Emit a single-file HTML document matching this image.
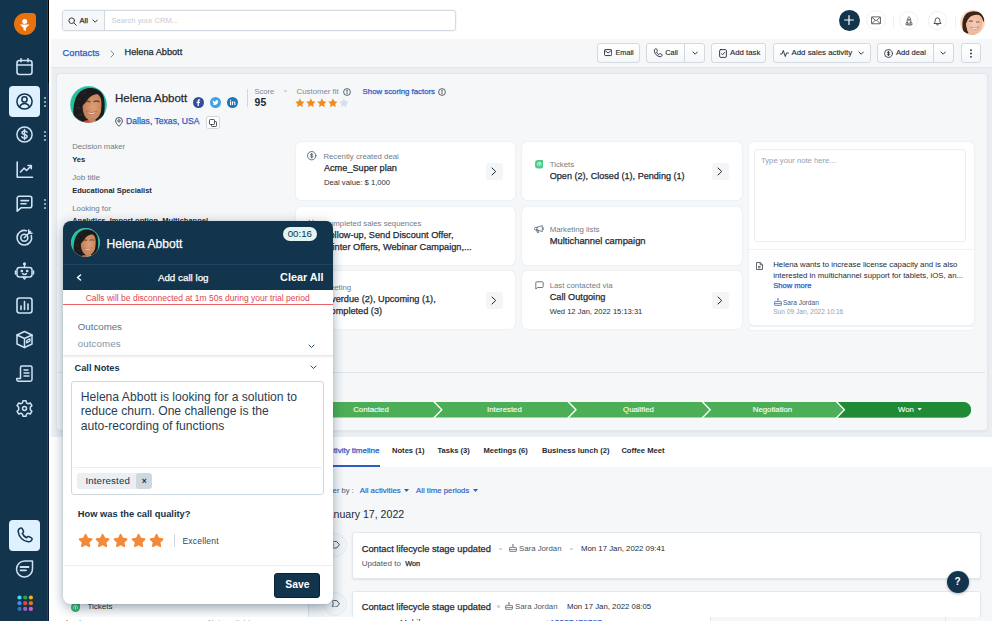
<!DOCTYPE html>
<html lang="en">
<head>
<meta charset="utf-8">
<title>Helena Abbott - Contacts</title>
<style>
*{box-sizing:border-box;margin:0;padding:0}
html,body{width:992px;height:621px;overflow:hidden}
body{font-family:"Liberation Sans",sans-serif;color:#12344d;background:#ebeff3;position:relative;font-size:9px}
.abs{position:absolute}
svg{display:block}
/* sidebar */
#side{position:absolute;left:0;top:0;width:49px;height:621px;background:#12344d}
#side .ic{position:absolute;left:14px;width:21px;height:21px}
#side .act{position:absolute;left:9px;width:31px;height:31px;border-radius:4px;background:#dff0ff}
#side .dots{position:absolute;left:44px;width:2px;height:10px}
#side .dots i{display:block;width:2px;height:2px;border-radius:1px;background:#b9c9d8;margin-bottom:2px}
/* top */
#top{position:absolute;left:49px;top:0;width:943px;height:39px;background:#fff}
#crumb{position:absolute;left:49px;top:39px;width:943px;height:29px;background:#f5f7f9;border-bottom:1px solid #dfe5ea}
.btn{position:absolute;top:43px;height:20px;border:1px solid #d3dae1;border-radius:3px;background:linear-gradient(#fff,#f5f7f9);font-size:8px;font-weight:bold;color:#1f2933;line-height:18px;white-space:nowrap}
/* main card */
#card{position:absolute;left:57px;top:74px;width:929.500px;height:356px;background:#f5f7f9;border:1px solid #f5f7f9;border-radius:3px;box-shadow:0 0 0 1px #e2e7ec,0 1px 3px rgba(18,52,77,.10)}
.tile{position:absolute;background:#fff;border-radius:5px;box-shadow:0 0 2px rgba(18,52,77,.10)}
.lbl{position:absolute;font-size:8px;color:#6f7c87;white-space:nowrap}
.val{position:absolute;font-size:9px;font-weight:bold;color:#1f2933;white-space:nowrap}
.sm{position:absolute;font-size:7.5px;color:#27313b;white-space:nowrap}
.chev{position:absolute;width:17px;height:17px;border-radius:3px;background:#f3f5f7}
a{color:#2c5cc5;text-decoration:none}
.md{-webkit-text-stroke:.250px currentColor}
.v2{color:#1f2933;white-space:nowrap}
#pop{position:absolute;left:63px;top:221px;width:269.500px;height:382.500px;border-radius:8px;box-shadow:0 7px 14px -3px rgba(18,52,77,.38),0 0 12px rgba(18,52,77,.16),0 0 2px rgba(18,52,77,.10)}
.tb{font-weight:bold;color:#1f2933;white-space:nowrap}
.tc{background:#fff;border:1px solid #e3e8ed;border-radius:3px;box-shadow:0 1px 2px rgba(18,52,77,.10)}
.btn span{font-size:7.800px;font-weight:normal;-webkit-text-stroke-width:.120px;margin-top:.400px}
</style>
</head>
<body>
<svg width="0" height="0" style="position:absolute"><defs>
<filter id="bl" x="-10%" y="-10%" width="120%" height="120%"><feGaussianBlur stdDeviation=".55"/></filter>
<filter id="bl2" x="-10%" y="-10%" width="120%" height="120%"><feGaussianBlur stdDeviation=".45"/></filter>
<radialGradient id="skin" cx=".55" cy=".45" r=".65"><stop offset="0" stop-color="#dfa076"/><stop offset=".7" stop-color="#c4835a"/><stop offset="1" stop-color="#8e5638"/></radialGradient>
<radialGradient id="skin2" cx=".5" cy=".45" r=".7"><stop offset="0" stop-color="#f6cdb4"/><stop offset=".75" stop-color="#ecb497"/><stop offset="1" stop-color="#d99477"/></radialGradient>
<clipPath id="c37"><circle cx="18.500" cy="18.500" r="18.400"/></clipPath>
<clipPath id="c25"><circle cx="12.500" cy="12.500" r="12.400"/></clipPath>
<symbol id="helena" viewBox="0 0 37 37"><g clip-path="url(#c37)"><rect width="37" height="37" fill="#21c2a1"/><g filter="url(#bl)">
<path d="M5 40C2.500 31 2.500 18 6.500 10.500 10 4 15.500 1.800 21 2c7 .3 11.500 4 13 10 1.500 7 .5 17-2.500 28z" fill="#1d1a1e"/>
<path d="M7 14c1.500-1 3-1 4 0M6 22c1.500-1 3-1 4.500.5M8 29c1.500-1 3-.5 4 .5M12 8c1.500-1 3-1 4.500 0" stroke="#3a3438" stroke-width="1.200" fill="none" opacity=".6"/>
<path d="M12.500 20c0-8 4-13.500 10-13.500S32 11.500 32 19c0 7-3 12.500-6.500 14.500l.5 5H17.500l.5-5c-3.500-2-5.500-7-5.500-13.500z" fill="url(#skin)"/>
<path d="M10.500 21c0-9 5-15.500 13-15.500 3 0 5.500 1 7 2.500-5.500-.3-10 1.500-12.500 5-1.500 2.500-3.500 5.500-7.500 8z" fill="#1d1a1e"/>
<path d="M31.500 10.500c1.500 3 2 8 1 14l-1.800 4.500c.8-6 1-12 .8-18.500z" fill="#1d1a1e"/>
<path d="M14.500 16c1.500-.8 4.500-.8 6 0M23.500 15.800c1.500-.8 4.500-.8 6 0" stroke="#4a2c22" stroke-width="1.400" fill="none" opacity=".7"/>
<path d="M16.500 25.500c2.800 1.500 7.200 1.500 10-.3-.8 3.800-8.700 4.300-10 .3z" fill="#fff" stroke="#a5503c" stroke-width=".700"/>
<path d="M12 37.500c1-2.500 4-3.500 6.500-3.500l1.500 3.500z" fill="#d2452f"/>
</g></g><circle cx="18.500" cy="18.500" r="18.300" fill="none" stroke="#fff" stroke-opacity=".4" stroke-width=".500"/></symbol>
<symbol id="usr" viewBox="0 0 25 25"><g clip-path="url(#c25)"><rect width="25" height="25" fill="#fbdcc3"/><g filter="url(#bl2)">
<path d="M3.500 22C1.500 16 2 8 6 4c4-3.500 11-3.500 15-.500 2.500 2 3.500 5.500 3 9l-3-6c-4-2.500-9-2-12 1-2.500 4-2.500 10-1.500 16z" fill="#3d2219"/>
<path d="M5.500 12.500c0-5.500 3.500-9.500 8.500-9.500s8.500 4 8.500 9.500c0 6-3 10.500-7 11.500l1 3H7l1.500-5c-2-2.500-3-6-3-9.500z" fill="url(#skin2)"/>
<path d="M4.500 13c.5-6 4.500-10.500 10-10.500 3 0 5.500 1.200 7 3-5-1.500-9.500-.5-12 2-1.500 1.500-2.500 3-3 5.500z" fill="#3d2219"/>
<path d="M3.500 10.500c-1 4.500 0 9.500 2.500 13.500l2.500-1C6.500 19.500 5.500 15 6 11z" fill="#3d2219"/>
<path d="M9 11.500c1-.6 2.800-.6 3.800 0M16 12.200c1-.5 2.500-.4 3.500.2" stroke="#5a4a52" stroke-width="1.100" fill="none" opacity=".8"/>
<path d="M10.500 17c2 1 5.500 1.200 8 0-.5 3.200-6.500 4-8 0z" fill="#fff" stroke="#e0707a" stroke-width=".800"/>
</g></g></symbol>
</defs></svg>
<!-- SIDEBAR -->
<div id="side">
<div class="abs" style="left:14px;top:13px;width:22px;height:22px;background:#e9720d;border-radius:11px 4px 11px 11px"></div>
<svg class="abs" style="left:14px;top:13px" width="22" height="22" viewBox="0 0 22 22"><circle cx="10.700" cy="8.500" r="2.500" fill="#fff"/><path d="M5.800 11.600h9.800l-3.700 3.500v2.900l-2.400-.900v-2z" fill="#fff"/></svg>
<!-- calendar -->
<svg class="ic" style="top:56px" viewBox="0 0 21 21" fill="none" stroke="#cfe2f5" stroke-width="1.6" stroke-linecap="round" stroke-linejoin="round"><rect x="3" y="4.5" width="15" height="14" rx="2.5"/><path d="M3 9h15M7 2.8v3M14 2.8v3"/></svg>
<!-- contact active -->
<div class="act" style="top:86px"></div>
<svg class="ic" style="top:91px" viewBox="0 0 21 21" fill="none" stroke="#12344d" stroke-width="1.5" stroke-linecap="round" stroke-linejoin="round"><circle cx="10.5" cy="10.5" r="7.6"/><circle cx="10.5" cy="8.4" r="2.6"/><path d="M5.8 15.6c.8-2.2 2.600-3.100 4.700-3.100s3.900.9 4.700 3.100"/></svg>
<div class="dots" style="top:97px"><i></i><i></i><i></i></div>
<!-- dollar -->
<svg class="ic" style="top:124px" viewBox="0 0 21 21" fill="none" stroke="#cfe2f5" stroke-width="1.5" stroke-linecap="round" stroke-linejoin="round"><circle cx="10.5" cy="10.5" r="7.6"/><path d="M13 8.300c-.4-.9-1.300-1.300-2.500-1.300-1.500 0-2.500.7-2.500 1.800 0 2.500 5.100 1.000 5.100 3.500 0 1.100-1.100 1.800-2.600 1.800-1.300 0-2.300-.5-2.700-1.400M10.500 5.400v10.200"/></svg>
<div class="dots" style="top:131px"><i></i><i></i><i></i></div>
<!-- chart -->
<svg class="ic" style="top:159px" viewBox="0 0 21 21" fill="none" stroke="#cfe2f5" stroke-width="1.6" stroke-linecap="round" stroke-linejoin="round"><path d="M3.200 3v15.300h15.300"/><path d="M6.500 13l3.500-3.800 2.600 2.300 4.600-4.800M14 6.500h3.300v3.300"/></svg>
<!-- chat -->
<svg class="ic" style="top:193px" viewBox="0 0 21 21" fill="none" stroke="#cfe2f5" stroke-width="1.6" stroke-linecap="round" stroke-linejoin="round"><path d="M3.200 18.200V5.200a2 2 0 0 1 2-2h10.600a2 2 0 0 1 2 2v7.600a2 2 0 0 1-2 2H7z"/><path d="M7 7.600h7.500M7 10.800h5"/></svg>
<div class="dots" style="top:199px"><i></i><i></i><i></i></div>
<!-- target -->
<svg class="ic" style="top:227px" viewBox="0 0 21 21" fill="none" stroke="#cfe2f5" stroke-width="1.600" stroke-linecap="round" stroke-linejoin="round"><path d="M17.300 8.500a7.300 7.300 0 1 1-4.800-4.800"/><circle cx="10.300" cy="10.700" r="3.500"/><path d="M10.300 10.700l6.200-6.200M14.800 3v3.200H18"/></svg>
<!-- bot -->
<svg class="ic" style="top:261px" viewBox="0 0 21 21" fill="none" stroke="#cfe2f5" stroke-width="1.5" stroke-linecap="round" stroke-linejoin="round"><rect x="3" y="6.500" width="15" height="9.500" rx="2.500"/><path d="M10.500 6.500V3.500M9 16l1.500 2 1.500-2M1.500 10v3M19.500 10v3"/><circle cx="10.500" cy="2.800" r=".8" fill="#cfe2f5"/><circle cx="7.800" cy="10" r=".6" fill="#cfe2f5"/><circle cx="13.200" cy="10" r=".6" fill="#cfe2f5"/><path d="M8.500 12.500c.6.700 1.300 1 2 1s1.400-.3 2-1"/></svg>
<!-- bars -->
<svg class="ic" style="top:295px" viewBox="0 0 21 21" fill="none" stroke="#cfe2f5" stroke-width="1.600" stroke-linecap="round" stroke-linejoin="round"><rect x="3" y="3" width="15" height="15" rx="2.500"/><path d="M7 14.500v-3.500M10.500 14.500V6.500M14 14.500V9"/></svg>
<!-- cube -->
<svg class="ic" style="top:329px" viewBox="0 0 21 21" fill="none" stroke="#cfe2f5" stroke-width="1.500" stroke-linecap="round" stroke-linejoin="round"><path d="M10.500 2.500l7.500 3.500v9l-7.500 3.500L3 15V6z"/><path d="M3 6l7.500 3.500L18 6M10.500 9.500v9"/><rect x="12.700" y="10.800" width="3.200" height="2.400" rx=".5" transform="skewY(-25) translate(0 6.500)"/></svg>
<!-- doc -->
<svg class="ic" style="top:363px" viewBox="0 0 21 21" fill="none" stroke="#cfe2f5" stroke-width="1.500" stroke-linecap="round" stroke-linejoin="round"><path d="M6.500 15.500V4.500a1.500 1.500 0 0 1 1.500-1.500h8.500a1.500 1.500 0 0 1 1.500 1.500v12a1.700 1.700 0 0 1-1.700 1.700H4.500a1.700 1.700 0 0 1-1.700-1.700v-1z"/><path d="M10 7h4M10 10h5M10 13h5"/></svg>
<!-- gear -->
<svg class="ic" style="top:398px" viewBox="0 0 21 21" fill="none" stroke="#cfe2f5" stroke-width="1.500" stroke-linecap="round" stroke-linejoin="round"><path d="M9 2.700h3l.5 2.200 1.700.9 2.100-.8 1.600 2.600-1.600 1.600v2.600l1.600 1.600-1.600 2.600-2.100-.8-1.700.9-.5 2.200H9l-.5-2.200-1.700-.9-2.100.8-1.600-2.600 1.600-1.600V9.200L3.100 7.600 4.700 5l2.100.8 1.700-.9z"/><circle cx="10.500" cy="10.500" r="2"/></svg>
<!-- phone active -->
<div class="act" style="top:519.500px"></div>
<svg class="ic" style="top:524.500px" viewBox="0 0 21 21" fill="none" stroke="#12344d" stroke-width="1.500" stroke-linecap="round" stroke-linejoin="round"><path d="M6.300 3.200c.7-.4 1.500-.2 1.900.5l1.200 2.200c.3.600.2 1.300-.3 1.800l-.8.700c.8 1.900 2.200 3.400 4.300 4.400l.8-.8c.5-.5 1.200-.6 1.800-.3l2.200 1.200c.7.400.9 1.200.5 1.900-.7 1.300-2 2.200-3.600 2-5.400-.8-9.400-4.800-10.100-10.100-.200-1.500.700-2.800 2.100-3.500z"/></svg>
<!-- freshchat -->
<svg class="ic" style="top:557.500px" viewBox="0 0 21 21" fill="none" stroke="#cfe2f5" stroke-width="1.500" stroke-linecap="round" stroke-linejoin="round"><path d="M10.500 3h8v7.500a8 8 0 1 1-8-7.500z"/><path d="M6.500 9h8M6.500 12.300h5.500" stroke-width="1.800"/></svg>
<div class="abs" style="left:47px;top:0;width:1px;height:621px;background:#27435c"></div><div class="abs" style="left:48px;top:0;width:1px;height:83px;background:#000"></div><div class="abs" style="left:48px;top:83px;width:1px;height:538px;background:#0c1b3f"></div>
<!-- grid -->
<svg class="abs" style="left:16.500px;top:595px" width="17" height="17" viewBox="0 0 17 17"><circle cx="2.500" cy="2.500" r="2.100" fill="#4dd6f2"/><circle cx="8.200" cy="2.500" r="2.100" fill="#28a745"/><circle cx="13.900" cy="2.500" r="2.100" fill="#f7b500"/><circle cx="2.500" cy="8.200" r="2.100" fill="#3d8df5"/><circle cx="8.200" cy="8.200" r="2.100" fill="#e2453c"/><circle cx="13.900" cy="8.200" r="2.100" fill="#f46b1b"/><circle cx="2.500" cy="13.900" r="2.100" fill="#2f74b8"/><circle cx="8.200" cy="13.900" r="2.100" fill="#a45bcb"/><circle cx="13.900" cy="13.900" r="2.100" fill="#cc5fd3"/></svg>
</div>
<!-- TOP BAR -->
<div id="top">
<div class="abs" style="left:13px;top:10px;width:393.700px;height:21px;border:1px solid #d3dae1;border-radius:3px;background:#fff;overflow:hidden;box-shadow:0 0 0 1px #f5f7f9">
 <div class="abs" style="left:0;top:0;width:42px;height:19px;background:#f5f7f9;border-right:1px solid #cfd7df"></div>
 <svg class="abs" style="left:5px;top:5.500px" width="9" height="9" viewBox="0 0 9 9" fill="none" stroke="#1f2933" stroke-width=".900" stroke-linecap="round"><circle cx="3.700" cy="3.700" r="2.800"/><path d="M5.800 5.800l2.500 2.500"/></svg>
 <span class="abs md" style="left:16.500px;top:4.500px;font-size:7.500px;line-height:10px;color:#1f2933">All</span>
 <svg class="abs" style="left:29px;top:7.500px" width="6.400" height="4.600" viewBox="0 0 7 5" fill="none" stroke="#1f2933" stroke-width="1" stroke-linecap="round" stroke-linejoin="round"><path d="M1 1l2.500 2.500L6 1"/></svg>
 <span class="abs" style="left:48.500px;top:5px;font-size:7.600px;line-height:10px;color:#c3cbd3">Search your CRM...</span>
</div>
<!-- right icons -->
<div class="abs" style="left:789.500px;top:9.500px;width:21px;height:21px;border-radius:50%;background:#12344d"></div>
<svg class="abs" style="left:795px;top:15px" width="10" height="10" viewBox="0 0 10 10" stroke="#fff" stroke-width="1.200" stroke-linecap="round"><path d="M5 .6v8.800M.6 5h8.800"/></svg>
<div class="abs" style="left:817px;top:10px;width:20px;height:20px;border-radius:50%;border:1px solid #eef1f4;background:#fff"></div>
<svg class="abs" style="left:822px;top:15.700px" width="10" height="8.900" viewBox="0 0 9 8" fill="none" stroke="#22282e" stroke-width=".650" stroke-linejoin="round"><rect x=".500" y=".800" width="8" height="6.200" rx=".600"/><path d="M.600 1l3.900 3.300L8.400 1M.600 7l3-3M8.400 7l-3-3"/></svg>
<div class="abs" style="left:843.500px;top:14.500px;width:1px;height:13px;background:#eef1f4"></div>
<div class="abs" style="left:850px;top:11px;width:19px;height:19px;border-radius:50%;border:1px solid #eef1f4;background:#fff"></div>
<svg class="abs" style="left:855.500px;top:16px" width="8" height="10" viewBox="0 0 8 10" fill="none" stroke="#22282e" stroke-width=".700" stroke-linejoin="round"><path d="M4 .600c1.300 1.200 1.800 2.600 1.800 4.200v2.400H2.200V4.800C2.200 3.200 2.700 1.800 4 .600zM2.200 5.800L1 7.600v1.200h6V7.600L5.800 5.800M3 8.800v.800M5 8.800v.800"/><circle cx="4" cy="3.800" r=".700"/></svg>
<div class="abs" style="left:879px;top:11px;width:19px;height:19px;border-radius:50%;border:1px solid #eef1f4;background:#fff"></div>
<svg class="abs" style="left:884px;top:16px" width="9" height="10" viewBox="0 0 9 10" fill="none" stroke="#22282e" stroke-width=".800" stroke-linejoin="round" stroke-linecap="round"><path d="M1.200 7.200c.800-.800 1-1.600 1-3a2.300 2.300 0 0 1 4.600 0c0 1.400.200 2.200 1 3zM3.600 8.500c.200.400.500.600.900.600s.700-.200.900-.600"/></svg>
<div class="abs" style="left:905.500px;top:14.500px;width:1px;height:13px;background:#eef1f4"></div>
<!-- user avatar -->
<svg class="abs" style="left:910.700px;top:9.700px" width="25" height="25"><use href="#usr"/></svg>
</div>
<div id="crumb">
<a class="abs md" style="left:13.500px;top:7.500px;font-size:9.400px;line-height:12px">Contacts</a>
<svg class="abs" style="left:60.500px;top:10.500px" width="5" height="8" viewBox="0 0 5 8" fill="none" stroke="#6f7c87" stroke-width=".900" stroke-linecap="round" stroke-linejoin="round"><path d="M1 1l3 3-3 3"/></svg>
<span class="abs md" style="left:75.500px;top:6.500px;font-size:9.200px;line-height:12px;color:#1f2933">Helena Abbott</span>
</div>
<!-- action buttons -->
<div class="btn" style="left:596.500px;width:43px">
 <svg class="abs" style="left:6px;top:5.300px" width="8.200" height="7.300" viewBox="0 0 9 8" fill="none" stroke="#1f2933" stroke-width="1" stroke-linejoin="round"><rect x=".600" y=".600" width="7.800" height="6.600" rx="1"/><path d="M.800 1.500l3.700 2.800 3.700-2.800"/></svg>
 <span class="abs md" style="left:18px;top:0;font-size:7.300px">Email</span></div>
<div class="btn" style="left:646px;width:58.500px">
 <svg class="abs" style="left:6px;top:4px" width="10" height="10" viewBox="0 0 10 10" fill="none" stroke="#1f2933" stroke-width=".900" stroke-linejoin="round"><path d="M2.600.800c.500-.200.900 0 1.100.400l.600 1.300c.200.400.100.800-.200 1.100l-.600.500c.500 1.100 1.200 1.900 2.300 2.400l.500-.600c.300-.300.700-.400 1.100-.200l1.300.600c.400.200.600.600.400 1.100-.300.900-1.100 1.400-2 1.300C4 8.300 1.600 5.900 1.300 2.800 1.200 1.900 1.700 1.100 2.600.800z"/></svg>
 <span class="abs md" style="left:18.200px;top:0;font-size:7.400px">Call</span>
 <div class="abs" style="left:37px;top:0;width:1px;height:18px;background:#cfd7df"></div>
 <svg class="abs" style="left:44.500px;top:7px" width="6.400" height="4.600" viewBox="0 0 7 5" fill="none" stroke="#1f2933" stroke-width="1" stroke-linecap="round" stroke-linejoin="round"><path d="M1 1l2.500 2.500L6 1"/></svg></div>
<div class="btn" style="left:711px;width:55px">
 <svg class="abs" style="left:7px;top:4.500px" width="8" height="9" viewBox="0 0 8 9" fill="none" stroke="#1f2933" stroke-width=".900" stroke-linejoin="round" stroke-linecap="round"><rect x=".600" y=".600" width="6.800" height="7.800" rx="1.200"/><path d="M2.400 4.600l1.200 1.200 2-2.400"/></svg>
 <span class="abs md" style="left:18px;top:0">Add task</span></div>
<div class="btn" style="left:772.500px;width:98px">
 <svg class="abs" style="left:6.500px;top:4.500px" width="9" height="9" viewBox="0 0 9 9" fill="none" stroke="#1f2933" stroke-width=".900" stroke-linejoin="round" stroke-linecap="round"><path d="M.500 5h1.500l1.300-3.500 2 6 1.300-3.500h1.900"/></svg>
 <span class="abs md" style="left:18px;top:0;font-size:7.850px">Add sales activity</span>
 <svg class="abs" style="left:84px;top:7px" width="6.400" height="4.600" viewBox="0 0 7 5" fill="none" stroke="#1f2933" stroke-width="1" stroke-linecap="round" stroke-linejoin="round"><path d="M1 1l2.500 2.500L6 1"/></svg></div>
<div class="btn" style="left:877px;width:76.500px">
 <svg class="abs" style="left:6px;top:4.500px" width="9" height="9" viewBox="0 0 9 9" fill="none" stroke="#1f2933" stroke-width=".800" stroke-linecap="round"><circle cx="4.500" cy="4.500" r="4"/><path d="M5.700 3.400c-.200-.400-.600-.600-1.200-.600-.700 0-1.200.300-1.200.800 0 1.200 2.400.500 2.400 1.700 0 .500-.500.800-1.200.800-.600 0-1.100-.200-1.300-.600M4.500 2.200v4.600"/></svg>
 <span class="abs md" style="left:18px;top:0;font-size:7.600px">Add deal</span>
 <div class="abs" style="left:54.500px;top:0;width:1px;height:18px;background:#cfd7df"></div>
 <svg class="abs" style="left:62px;top:7px" width="6.400" height="4.600" viewBox="0 0 7 5" fill="none" stroke="#1f2933" stroke-width="1" stroke-linecap="round" stroke-linejoin="round"><path d="M1 1l2.500 2.500L6 1"/></svg></div>
<div class="btn" style="left:960.500px;width:20.500px">
 <svg class="abs" style="left:8.200px;top:4.500px" width="2" height="9" viewBox="0 0 2 9" fill="#1f2933"><circle cx="1" cy="1.200" r=".900"/><circle cx="1" cy="4.500" r=".900"/><circle cx="1" cy="7.800" r=".900"/></svg></div>

<div class="abs" style="left:49px;top:39px;width:2.500px;height:582px;background:linear-gradient(90deg,#fff 40%,rgba(255,255,255,0))"></div>
<!-- MAIN CARD -->
<div id="card">
<svg class="abs" style="left:11.50px;top:11.00px" width="37" height="37"><use href="#helena"/></svg>
<span class="abs md" style="left:57.00px;top:15.70px;font-size:11.5px;line-height:14px;color:#1f2933;white-space:nowrap">Helena Abbott</span>
<svg class="abs" style="left:135.20px;top:22.30px" width="11" height="11" viewBox="0 0 11 11"><circle cx="5.500" cy="5.500" r="5.500" fill="#2f4f9e"/><path d="M5.900 9V5.900h1l.2-1.200H5.900v-.700c0-.400.100-.600.600-.600h.600V2.300c-.100 0-.500-.100-.900-.100-1 0-1.600.600-1.600 1.600v.900h-1v1.200h1V9z" fill="#fff"/></svg>
<svg class="abs" style="left:152.20px;top:22.30px" width="11" height="11" viewBox="0 0 11 11"><circle cx="5.500" cy="5.500" r="5.500" fill="#3da1ea"/><path d="M8.600 3.700c-.200.100-.500.200-.700.200.300-.200.500-.400.600-.700-.300.100-.500.200-.800.300a1.300 1.300 0 0 0-2.200 1.200c-1.100-.100-2-.600-2.700-1.400-.300.600-.100 1.300.4 1.700-.200 0-.400-.100-.600-.200 0 .600.500 1.200 1.100 1.300-.200.100-.400.100-.600 0 .200.500.700.900 1.200.900-.500.400-1.200.600-1.900.5.600.400 1.300.600 2 .600 2.400 0 3.700-2 3.700-3.700v-.200c.200-.100.400-.300.500-.5z" fill="#fff"/></svg>
<svg class="abs" style="left:168.90px;top:22.30px" width="11" height="11" viewBox="0 0 11 11"><circle cx="5.500" cy="5.500" r="5.500" fill="#1b79ba"/><path d="M3 4.500h1.100V8H3zM3.550 2.700a.65.65 0 1 1 0 1.300.65.65 0 0 1 0-1.300zM4.900 4.500H6v.5c.200-.300.600-.600 1.100-.600 1.100 0 1.300.700 1.300 1.600V8H7.300V6.200c0-.400 0-.900-.600-.900s-.700.500-.7.900V8H4.900z" fill="#fff"/></svg>
<svg class="abs" style="left:57.30px;top:42.30px" width="8" height="10" viewBox="0 0 8 10" fill="none" stroke="#1f2933" stroke-width=".800"><path d="M4 9.300C2 7.300.600 5.600.600 3.900a3.400 3.400 0 0 1 6.800 0C7.400 5.600 6 7.300 4 9.300z"/><circle cx="4" cy="3.900" r="1.200"/></svg>
<a class="abs md" style="left:68.00px;top:41.00px;font-size:8.600px;line-height:11px;white-space:nowrap">Dallas, Texas, USA</a>
<div class="abs" style="left:147.50px;top:41.00px;width:14.500px;height:13px;border:1px solid #cfd7df;border-radius:2.500px;background:#fff"><svg class="abs" style="left:2.500px;top:2px" width="8" height="8" viewBox="0 0 8 8" fill="none" stroke="#1f2933" stroke-width=".800" stroke-linejoin="round"><rect x=".500" y=".500" width="5" height="5" rx=".800"/><path d="M5.500 2.500h1.200a.8.800 0 0 1 .8.800v3.400a.8.800 0 0 1-.8.800H3.300a.8.800 0 0 1-.8-.8V5.500"/></svg></div>
<div class="abs" style="left:189.30px;top:14.00px;width:1px;height:17.500px;background:#cfd7df"></div>
<span class="lbl" style="left:196.40px;top:11.50px;font-size:7.6px;line-height:10px;color:#7b8a97">Score</span>
<span class="val" style="left:196.40px;top:22.30px;font-size:10.4px;line-height:12px;letter-spacing:.300px">95</span>
<div class="abs" style="left:226.20px;top:14.90px;width:2.600px;height:2.600px;border-radius:1.300px;background:#c9d1d9"></div>
<span class="lbl" style="left:238.60px;top:11.50px;font-size:7.8px;line-height:10px;color:#7b8a97">Customer fit</span>
<svg class="abs" style="left:284.9px;top:13.200000000000003px" width="8" height="8" viewBox="0 0 8 8" fill="none" stroke="#1f2933" stroke-width=".700"><circle cx="4" cy="4" r="3.400"/><path d="M4 3.600v2.200" stroke-linecap="round"/><circle cx="4" cy="2.400" r=".300" fill="#1f2933"/></svg><svg class="abs" style="left:237.40px;top:22.60px" width="9.8" height="9.8" viewBox="0 0 10 10"><path d="M5 .3l1.45 3 3.25.45-2.35 2.3.55 3.25L5 7.75 2.1 9.3l.55-3.250L.3 3.750l3.250-.450z" fill="#f28b1c"/></svg>
<svg class="abs" style="left:248.20px;top:22.60px" width="9.8" height="9.8" viewBox="0 0 10 10"><path d="M5 .3l1.45 3 3.25.45-2.35 2.3.55 3.25L5 7.75 2.1 9.3l.55-3.250L.3 3.750l3.250-.450z" fill="#f28b1c"/></svg>
<svg class="abs" style="left:259.00px;top:22.60px" width="9.8" height="9.8" viewBox="0 0 10 10"><path d="M5 .3l1.45 3 3.25.45-2.35 2.3.55 3.25L5 7.75 2.1 9.3l.55-3.250L.3 3.750l3.250-.450z" fill="#f28b1c"/></svg>
<svg class="abs" style="left:269.80px;top:22.60px" width="9.8" height="9.8" viewBox="0 0 10 10"><path d="M5 .3l1.45 3 3.25.45-2.35 2.3.55 3.25L5 7.75 2.1 9.3l.55-3.250L.3 3.750l3.250-.450z" fill="#f28b1c"/></svg>
<svg class="abs" style="left:280.60px;top:22.60px" width="9.8" height="9.8" viewBox="0 0 10 10"><path d="M5 .3l1.45 3 3.25.45-2.35 2.3.55 3.25L5 7.75 2.1 9.3l.55-3.250L.3 3.750l3.250-.450z" fill="#d5dde5"/></svg>
<a class="abs md" style="left:304.60px;top:11.50px;font-size:7.800px;line-height:10px;white-space:nowrap">Show scoring factors</a>
<svg class="abs" style="left:380.3px;top:13.200000000000003px" width="8" height="8" viewBox="0 0 8 8" fill="none" stroke="#1f2933" stroke-width=".700"><circle cx="4" cy="4" r="3.400"/><path d="M4 3.600v2.200" stroke-linecap="round"/><circle cx="4" cy="2.400" r=".300" fill="#1f2933"/></svg><span class="lbl" style="left:14.20px;top:66.90px;font-size:7.7px;line-height:10px;">Decision maker</span>
<span class="val" style="left:14.20px;top:80.00px;font-size:7.5px;line-height:10px;">Yes</span>
<span class="lbl" style="left:14.20px;top:98.40px;font-size:8.05px;line-height:10px;">Job title</span>
<span class="val" style="left:14.20px;top:110.50px;font-size:7.5px;line-height:10px;">Educational Specialist</span>
<span class="lbl" style="left:14.20px;top:129.10px;font-size:7.85px;line-height:10px;">Looking for</span>
<span class="val" style="left:14.20px;top:141.20px;font-size:7.5px;line-height:10px;">Analytics, Import option, Multichannel</span>
<div class="tile" style="left:237.60px;top:67.00px;width:219.3px;height:58px"></div>
<div class="tile" style="left:464.00px;top:67.00px;width:220px;height:58px"></div>
<div class="tile" style="left:237.60px;top:131.70px;width:219.3px;height:58px"></div>
<div class="tile" style="left:464.00px;top:131.70px;width:220px;height:58px"></div>
<div class="tile" style="left:237.60px;top:196.00px;width:219.3px;height:58px"></div>
<div class="tile" style="left:464.00px;top:196.00px;width:220px;height:58px"></div>
<svg class="abs" style="left:249.20px;top:76.20px" width="9.400" height="9.400" viewBox="0 0 9 9" fill="none" stroke="#475867" stroke-width=".800" stroke-linecap="round"><circle cx="4.500" cy="4.500" r="4"/><path d="M5.700 3.400c-.200-.400-.600-.600-1.200-.600-.700 0-1.200.300-1.200.800 0 1.200 2.400.500 2.400 1.700 0 .500-.500.800-1.200.800-.600 0-1.100-.200-1.300-.600M4.500 2.200v4.600"/></svg>
<span class="lbl" style="left:265.40px;top:76.70px;font-size:7.8px;line-height:10px;">Recently created deal</span>
<span class="abs md v2" style="left:265.90px;top:86.50px;font-size:9.2px;line-height:12px;">Acme_Super plan</span>
<span class="sm" style="left:265.90px;top:102.80px;font-size:7.7px;line-height:9px;">Deal value: $ 1,000</span>
<div class="chev" style="left:427.5px;top:87.7px"><svg class="abs" style="left:5.800px;top:4px" width="6" height="9" viewBox="0 0 6 9" fill="none" stroke="#1f2933" stroke-width="1" stroke-linecap="round" stroke-linejoin="round"><path d="M1 1l3.700 3.500L1 8"/></svg></div><svg class="abs" style="left:476.70px;top:85.40px" width="8.500" height="8.500" viewBox="0 0 9 9"><path d="M3.200 0H9v5.800A3.200 3.200 0 0 1 5.800 9H3.200A3.200 3.200 0 0 1 0 5.800V3.200A3.200 3.200 0 0 1 3.200 0z" fill="#4fcb8c"/><path d="M2.600 5.300V4.400a1.900 1.900 0 0 1 3.800 0v.9M4.500 3.800v2.400" fill="none" stroke="#fff" stroke-width=".800" stroke-linecap="round"/></svg>
<span class="lbl" style="left:491.70px;top:84.70px;font-size:7.8px;line-height:10px;">Tickets</span>
<span class="abs md v2" style="left:491.70px;top:94.80px;font-size:9.1px;line-height:12px;">Open (2), Closed (1), Pending (1)</span>
<div class="chev" style="left:653.5px;top:87.9px"><svg class="abs" style="left:5.800px;top:4px" width="6" height="9" viewBox="0 0 6 9" fill="none" stroke="#1f2933" stroke-width="1" stroke-linecap="round" stroke-linejoin="round"><path d="M1 1l3.700 3.500L1 8"/></svg></div><svg class="abs" style="left:249.80px;top:144.00px" width="9" height="8" viewBox="0 0 9 8" fill="none" stroke="#475867" stroke-width=".800" stroke-linejoin="round"><path d="M.800 1l3.200 3-3.200 3M4.500 1l3.200 3-3.200 3"/></svg>
<span class="lbl" style="left:265.40px;top:143.90px;font-size:7.8px;line-height:10px;">Completed sales sequences</span>
<span class="abs md v2" style="left:265.90px;top:153.70px;font-size:9.2px;line-height:12px;">Follow-up, Send Discount Offer,</span>
<span class="abs md v2" style="left:265.90px;top:165.80px;font-size:9.2px;line-height:12px;">Winter Offers, Webinar Campaign,...</span>
<svg class="abs" style="left:476.20px;top:149.80px" width="10" height="8.500" viewBox="0 0 10 8.500" fill="none" stroke="#475867" stroke-width=".750" stroke-linejoin="round" stroke-linecap="round"><path d="M3.300 2.300L8.300.600v6L3.300 5zM3.300 2.300H1.800a1.300 1.300 0 0 0 0 2.700h1.500M2.600 5l.7 2.600h1.300l-.6-2.300M9.300 2.800v1.700"/></svg>
<span class="lbl" style="left:491.70px;top:149.90px;font-size:7.8px;line-height:10px;">Marketing lists</span>
<span class="abs md v2" style="left:491.70px;top:159.70px;font-size:9.4px;line-height:12px;">Multichannel campaign</span>
<svg class="abs" style="left:249.80px;top:208.00px" width="8" height="8" viewBox="0 0 8 8" fill="none" stroke="#475867" stroke-width=".800"><rect x=".500" y="1.200" width="7" height="6.300" rx="1"/><path d="M.5 3.200h7M2.300.400v1.600M5.700.400v1.600"/></svg>
<span class="lbl" style="left:265.40px;top:207.90px;font-size:7.8px;line-height:10px;">Meeting</span>
<span class="abs md v2" style="left:265.90px;top:217.70px;font-size:9.2px;line-height:12px;">Overdue (2), Upcoming (1),</span>
<span class="abs md v2" style="left:265.90px;top:230.20px;font-size:9.2px;line-height:12px;">Completed (3)</span>
<div class="chev" style="left:427.5px;top:216.700px"><svg class="abs" style="left:5.800px;top:4px" width="6" height="9" viewBox="0 0 6 9" fill="none" stroke="#1f2933" stroke-width="1" stroke-linecap="round" stroke-linejoin="round"><path d="M1 1l3.700 3.500L1 8"/></svg></div><svg class="abs" style="left:476.50px;top:205.60px" width="9" height="9" viewBox="0 0 9 9" fill="none" stroke="#475867" stroke-width=".800" stroke-linejoin="round"><path d="M.800 8V1.800a1 1 0 0 1 1-1h5.400a1 1 0 0 1 1 1v3.700a1 1 0 0 1-1 1H2.600z"/></svg>
<span class="lbl" style="left:491.70px;top:205.60px;font-size:7.8px;line-height:10px;">Last contacted via</span>
<span class="abs md v2" style="left:491.70px;top:215.80px;font-size:9.2px;line-height:12px;">Call Outgoing</span>
<span class="sm" style="left:491.70px;top:231.70px;font-size:7.55px;line-height:9px;">Wed 12 Jan, 2022 15:13:31</span>
<div class="chev" style="left:653.5px;top:216.700px"><svg class="abs" style="left:5.800px;top:4px" width="6" height="9" viewBox="0 0 6 9" fill="none" stroke="#1f2933" stroke-width="1" stroke-linecap="round" stroke-linejoin="round"><path d="M1 1l3.700 3.500L1 8"/></svg></div><div class="tile" style="left:691.00px;top:67.00px;width:225px;height:183px;border-radius:5px"></div>
<div class="tile" style="left:691.00px;top:251.80px;width:225px;height:3.500px;border-radius:0 0 5px 5px"></div>
<div class="abs" style="left:695.50px;top:73.50px;width:212px;height:93px;border:1px solid #ebeff3;border-radius:3px;background:#fff"></div>
<span class="lbl" style="left:703.00px;top:81.30px;font-size:7.7px;line-height:9px;color:#92a2b1">Type your note here...</span>
<div class="abs" style="left:691.00px;top:174.00px;width:225.500px;height:1px;background:#f0f3f5"></div>
<svg class="abs" style="left:697.80px;top:186.50px" width="7" height="8" viewBox="0 0 7 8" fill="none" stroke="#1f2933" stroke-width=".700" stroke-linejoin="round"><path d="M.500.500h3.800L6.500 2.700V7.500H.5z"/><path d="M4.200.600v2.200h2.200M2 4.500h2.500M2 5.900h2.500"/></svg>
<span class="abs" style="left:715.20px;top:184.50px;font-size:7.8px;line-height:10px;color:#1f2933;white-space:nowrap;">Helena wants to increase license capacity and is also</span>
<span class="abs" style="left:715.20px;top:195.50px;font-size:7.8px;line-height:10px;color:#1f2933;white-space:nowrap;">interested in multichannel support for tablets, iOS, an...</span>
<a class="abs md" style="left:715.20px;top:205.80px;font-size:7.600px;line-height:10px;white-space:nowrap">Show more</a>
<svg class="abs" style="left:715.60px;top:222.80px" width="8" height="8" viewBox="0 0 8 8" fill="none" stroke="#2c5cc5" stroke-width=".700" stroke-linejoin="round"><rect x=".600" y="3.400" width="6.800" height="4" rx=".500"/><path d="M4 3.400V1.200M.6 5.600h6.800M2.400 4.500v.2M5.600 4.500v.2"/><circle cx="4" cy=".900" r=".400"/></svg>
<span class="sm" style="left:724.90px;top:223.10px;font-size:6.6px;line-height:9px;color:#475867">Sara Jordan</span>
<span class="sm" style="left:715.20px;top:231.80px;font-size:6.6px;line-height:9px;color:#92a2b1">Sun 09 Jan, 2022 10:16</span>
<div class="abs" style="left:0;top:297.00px;width:927px;height:1px;background:#dfe5ea"></div>
<svg class="abs" style="left:14.00px;top:326.50px;overflow:visible" width="899" height="15.500" viewBox="72 0 899 15.500"><path d="M79.500 0H963.300a7.750 7.750 0 0 1 0 15.500H79.500a7.750 7.750 0 0 1 0-15.500z" fill="#4caf57"/><path d="M836.400 0H963.300a7.750 7.750 0 0 1 0 15.500H836.400l8-7.750z" fill="#1f8b34"/><path d="M164.9 -.8l8.300 8.550-8.300 8.550" fill="none" stroke="#fff" stroke-width="1.350"/><path d="M299.3 -.8l8.300 8.550-8.300 8.550" fill="none" stroke="#fff" stroke-width="1.350"/><path d="M433.5 -.8l8.300 8.550-8.300 8.550" fill="none" stroke="#fff" stroke-width="1.350"/><path d="M567.7 -.8l8.300 8.550-8.300 8.550" fill="none" stroke="#fff" stroke-width="1.350"/><path d="M701.9 -.8l8.300 8.550-8.300 8.550" fill="none" stroke="#fff" stroke-width="1.350"/><path d="M836.1 -.8l8.300 8.550-8.300 8.550" fill="none" stroke="#fff" stroke-width="1.350"/><text x="122" y="10.400" font-size="7.800" fill="#fff" text-anchor="middle" font-family="Liberation Sans, sans-serif" stroke="#fff" stroke-width=".100">New</text><text x="371" y="10.400" font-size="7.800" fill="#fff" text-anchor="middle" font-family="Liberation Sans, sans-serif" stroke="#fff" stroke-width=".100">Contacted</text><text x="504.4" y="10.400" font-size="7.800" fill="#fff" text-anchor="middle" font-family="Liberation Sans, sans-serif" stroke="#fff" stroke-width=".100">Interested</text><text x="638.5" y="10.400" font-size="7.800" fill="#fff" text-anchor="middle" font-family="Liberation Sans, sans-serif" stroke="#fff" stroke-width=".100">Qualified</text><text x="772.5" y="10.400" font-size="7.800" fill="#fff" text-anchor="middle" font-family="Liberation Sans, sans-serif" stroke="#fff" stroke-width=".100">Negotiation</text><text x="906" y="10.400" font-size="7.800" fill="#fff" text-anchor="middle" font-family="Liberation Sans, sans-serif" stroke="#fff" stroke-width=".100">Won</text><path d="M917.500 6h4.400l-2.200 2.600z" fill="#fff"/></svg>
</div>
<!-- LOWER -->
<div id="lower">
<div class="abs" style="left:49px;top:436.500px;width:260px;height:190px;background:#fff;border-right:1px solid #dfe5ea"></div>
<div class="abs" style="left:309px;top:436.500px;width:683px;height:30px;background:#fff"></div>
<div class="abs" style="left:309px;top:466.500px;width:683px;height:160px;background:#f5f7f9"></div>
<span class="abs md" style="left:324.30px;top:445.80px;font-size:8px;line-height:10px;color:#2c5cc5;white-space:nowrap">Activity timeline</span>
<div class="abs" style="left:322px;top:465px;width:57.700px;height:2px;background:#2c5cc5"></div>
<span class="abs tb" style="left:392.00px;top:445.50px;font-size:7.6px;line-height:10px;">Notes (1)</span>
<span class="abs tb" style="left:437.50px;top:445.50px;font-size:7.6px;line-height:10px;">Tasks (3)</span>
<span class="abs tb" style="left:483.50px;top:445.50px;font-size:7.6px;line-height:10px;">Meetings (6)</span>
<span class="abs tb" style="left:542.00px;top:445.50px;font-size:7.6px;line-height:10px;">Business lunch (2)</span>
<span class="abs tb" style="left:621.40px;top:445.50px;font-size:7.6px;line-height:10px;">Coffee Meet</span>
<span class="abs" style="left:322.80px;top:485.50px;font-size:7.5px;line-height:10px;color:#475867;white-space:nowrap">Filter by :</span>
<span class="abs md" style="left:359.70px;top:485.50px;font-size:7.86px;line-height:10px;color:#2c5cc5;white-space:nowrap;-webkit-text-stroke-width:.150px">All activities</span>
<svg class="abs" style="left:404.400px;top:489.200px" width="5" height="3" viewBox="0 0 5 3"><path d="M0 0h5L2.500 3z" fill="#2c5cc5"/></svg>
<span class="abs md" style="left:416.00px;top:485.50px;font-size:7.8px;line-height:10px;color:#2c5cc5;white-space:nowrap;-webkit-text-stroke-width:.150px">All time periods</span>
<svg class="abs" style="left:472.900px;top:489.200px" width="5" height="3" viewBox="0 0 5 3"><path d="M0 0h5L2.500 3z" fill="#2c5cc5"/></svg>
<span class="abs" style="left:322.30px;top:507.10px;font-size:10.6px;line-height:14px;color:#1f2933;white-space:nowrap">January 17, 2022</span>
<div class="abs" style="left:322.800px;top:533.1px;width:24px;height:24px;border-radius:50%;background:#f1f4f7;border:1px solid #e6eaee"></div>
<svg class="abs" style="left:331.300px;top:541.3px" width="9" height="7.500" viewBox="0 0 9 7.500" fill="none" stroke="#1f2933" stroke-width=".800" stroke-linejoin="round"><path d="M1.300 1.200C2 .700 2.600.500 3.300.500h2.400l2.700 3.200-2.700 3.300H3.300c-.700 0-1.300-.200-2-.700.600-.800.900-1.700.9-2.600s-.300-1.700-.900-2.500z"/></svg>
<div class="abs" style="left:322.800px;top:591.5px;width:24px;height:24px;border-radius:50%;background:#f1f4f7;border:1px solid #e6eaee"></div>
<svg class="abs" style="left:331.300px;top:599.7px" width="9" height="7.500" viewBox="0 0 9 7.500" fill="none" stroke="#1f2933" stroke-width=".800" stroke-linejoin="round"><path d="M1.300 1.200C2 .700 2.600.500 3.300.500h2.400l2.700 3.200-2.700 3.300H3.300c-.700 0-1.300-.200-2-.700.600-.800.900-1.700.9-2.600s-.300-1.700-.900-2.500z"/></svg>
<div class="abs tc" style="left:352px;top:532px;width:628.500px;height:46.500px"></div>
<div class="abs tc" style="left:352px;top:590.800px;width:628.500px;height:46px"></div>
<span class="abs md v2" style="left:361.70px;top:543.00px;font-size:9.3px;line-height:12px;">Contact lifecycle stage updated</span>
<div class="abs" style="left:499.20px;top:547.50px;width:2.600px;height:2.600px;border-radius:1.300px;background:#c9d1d9"></div>
<svg class="abs" style="left:509.2px;top:543.8px" width="8" height="8" viewBox="0 0 8 8" fill="none" stroke="#475867" stroke-width=".700" stroke-linejoin="round"><rect x=".600" y="3.400" width="6.800" height="4" rx=".500"/><path d="M4 3.400V1.200M.6 5.600h6.800M2.400 4.500v.2M5.600 4.500v.2"/><circle cx="4" cy=".900" r=".400"/></svg>
<span class="abs" style="left:519.00px;top:544.00px;font-size:7.8px;line-height:10px;color:#475867;white-space:nowrap">Sara Jordan</span>
<div class="abs" style="left:570.20px;top:547.50px;width:2.600px;height:2.600px;border-radius:1.300px;background:#c9d1d9"></div>
<span class="abs" style="left:581.00px;top:544.00px;font-size:7.8px;line-height:10px;color:#1f2933;white-space:nowrap">Mon 17 Jan, 2022 09:41</span>
<span class="abs" style="left:361.70px;top:559.00px;font-size:8px;line-height:9px;color:#475867;white-space:nowrap">Updated to</span>
<span class="abs md" style="left:405.20px;top:559.00px;font-size:7.3px;line-height:9px;color:#1f2933;white-space:nowrap">Won</span>
<span class="abs md v2" style="left:361.70px;top:600.60px;font-size:9.3px;line-height:12px;">Contact lifecycle stage updated</span>
<div class="abs" style="left:497.20px;top:605.00px;width:2.600px;height:2.600px;border-radius:1.300px;background:#c9d1d9"></div>
<svg class="abs" style="left:505.2px;top:601.8px" width="8" height="8" viewBox="0 0 8 8" fill="none" stroke="#475867" stroke-width=".700" stroke-linejoin="round"><rect x=".600" y="3.400" width="6.800" height="4" rx=".500"/><path d="M4 3.400V1.200M.6 5.600h6.800M2.400 4.500v.2M5.600 4.500v.2"/><circle cx="4" cy=".900" r=".400"/></svg>
<span class="abs" style="left:515.00px;top:602.00px;font-size:7.8px;line-height:10px;color:#475867;white-space:nowrap">Sara Jordan</span>
<span class="abs" style="left:567.00px;top:601.60px;font-size:7.8px;line-height:10px;color:#1f2933;white-space:nowrap">Mon 17 Jan, 2022 08:05</span>
<svg class="abs" style="left:70.800px;top:602.600px" width="9" height="9" viewBox="0 0 9 9"><path d="M4.500 0H9v4.500A4.500 4.500 0 1 1 4.500 0z" fill="#35b96f"/><path d="M2.600 5.300V4.400a1.900 1.900 0 0 1 3.800 0v.9M4.500 3.800v2.400" fill="none" stroke="#fff" stroke-width=".800" stroke-linecap="round"/></svg>
<span class="abs" style="left:87.50px;top:601.80px;font-size:8px;line-height:10px;color:#1f2933;white-space:nowrap">Tickets</span>
<div class="abs" style="left:946.500px;top:570.500px;width:22px;height:22px;border-radius:50%;background:#12344d;box-shadow:0 1px 3px rgba(0,0,0,.3);color:#fff;font-size:10px;font-weight:bold;text-align:center;line-height:22px">?</div>
</div>
<!-- POPUP -->
<div id="pop">
<div class="abs" style="left:0;top:0;width:269.500px;height:69px;background:#12344d;border-radius:8px 7px 0 0"></div>
<div class="abs" style="left:0;top:43px;width:269.500px;height:1px;background:#1f4560"></div>
<svg class="abs" style="left:8px;top:6.8px" width="29" height="29"><use href="#helena"/></svg>
<span class="abs md" style="left:43.50px;top:15.50px;font-size:12.1px;line-height:15px;white-space:nowrap;color:#fff">Helena Abbott</span>
<div class="abs" style="left:220px;top:6.3px;width:33.700px;height:13.400px;border-radius:7px;background:#e2f5f3;color:#12344d;font-size:9.700px;line-height:13.400px;text-align:center">00:16</div>
<svg class="abs" style="left:13.4px;top:52.7px" width="6" height="7" viewBox="0 0 6 7" fill="none" stroke="#fff" stroke-width="1.500" stroke-linecap="round" stroke-linejoin="round"><path d="M4.500 1L1.500 3.500l3 2.500"/></svg>
<span class="abs md" style="left:94.90px;top:50.60px;font-size:9.8px;line-height:12px;white-space:nowrap;color:#fff">Add call log</span>
<span class="abs" style="left:217.10px;top:50.10px;font-size:10.8px;line-height:13px;white-space:nowrap;color:#fff;font-weight:bold">Clear All</span>
<div class="abs" style="left:0;top:69px;width:269.500px;height:14.500px;background:#fff;border-bottom:1px solid #e8646c"></div>
<span class="abs" style="left:22.70px;top:71.70px;font-size:8.5px;line-height:10px;white-space:nowrap;color:#e0454f">Calls will be disconnected at 1m 50s during your trial period</span>
<div class="abs" style="left:0;top:83.500px;width:269.500px;height:299px;background:#fff;border-radius:0 0 8px 8px"></div>
<span class="abs" style="left:14.80px;top:100.30px;font-size:9.7px;line-height:12px;white-space:nowrap;color:#5b7287">Outcomes</span>
<span class="abs" style="left:14.80px;top:116.70px;font-size:9.7px;line-height:12px;white-space:nowrap;color:#8595a3;letter-spacing:.100px">outcomes</span>
<svg class="abs" style="left:245.2px;top:123.1px" width="7" height="5" viewBox="0 0 7 5" fill="none" stroke="#264966" stroke-width="1" stroke-linecap="round" stroke-linejoin="round"><path d="M1 1l2.500 2.500L6 1"/></svg>
<div class="abs" style="left:0;top:133.5px;width:269.500px;height:1px;background:#e6ebef;box-shadow:0 1px 2px rgba(18,52,77,.12)"></div>
<span class="abs" style="left:11.60px;top:141.20px;font-size:9.2px;line-height:12px;white-space:nowrap;color:#12344d;font-weight:bold">Call Notes</span>
<svg class="abs" style="left:247.3px;top:143.8px" width="7" height="5" viewBox="0 0 7 5" fill="none" stroke="#264966" stroke-width="1" stroke-linecap="round" stroke-linejoin="round"><path d="M1 1l2.500 2.500L6 1"/></svg>
<div class="abs" style="left:8.400px;top:159.500px;width:252.500px;height:114px;border:1px solid #cfd7df;border-radius:3px;background:#fff"></div>
<span class="abs" style="left:17.70px;top:168.60px;font-size:12.13px;line-height:15px;white-space:nowrap;color:#2b3d4f">Helena Abbott is looking for a solution to</span>
<span class="abs" style="left:17.70px;top:183.25px;font-size:12.13px;line-height:15px;white-space:nowrap;color:#2b3d4f">reduce churn. One challenge is the</span>
<span class="abs" style="left:17.70px;top:197.90px;font-size:12.13px;line-height:15px;white-space:nowrap;color:#2b3d4f">auto-recording of functions</span>
<div class="abs" style="left:9.7px;top:246.0px;width:249.700px;height:1px;background:#ebeff3"></div>
<div class="abs" style="left:13.9px;top:252.2px;width:75.500px;height:15.500px;border-radius:3px;background:#ebeff3;overflow:hidden"><div class="abs" style="left:59px;top:0;width:16.500px;height:15.500px;background:#cfd7df;border-radius:3px"></div></div>
<span class="abs" style="left:22.40px;top:254.30px;font-size:9.7px;line-height:12px;white-space:nowrap;color:#12344d;letter-spacing:.150px">Interested</span>
<span class="abs" style="left:78.80px;top:255.00px;font-size:8.5px;line-height:10px;white-space:nowrap;color:#12344d;font-weight:bold">×</span>
<span class="abs" style="left:14.80px;top:287.00px;font-size:9.3px;line-height:12px;white-space:nowrap;color:#12344d;font-weight:bold">How was the call quality?</span>
<svg class="abs" style="left:14.50px;top:311.80px" width="15.200" height="15.200" viewBox="0 0 16 16"><path d="M8 .9c.4 0 .7.200.9.600l1.700 3.500 3.800.600c.8.100 1.100 1.100.5 1.700l-2.800 2.700.700 3.800c.1.800-.7 1.400-1.400 1l-3.400-1.800-3.400 1.800c-.7.400-1.500-.2-1.400-1l.7-3.800L1.100 7.300c-.6-.6-.3-1.600.5-1.700l3.800-.600L7.100 1.500c.200-.400.500-.600.900-.600z" fill="#f4893a"/></svg>
<svg class="abs" style="left:32.40px;top:311.80px" width="15.200" height="15.200" viewBox="0 0 16 16"><path d="M8 .9c.4 0 .7.200.9.600l1.700 3.500 3.800.600c.8.100 1.100 1.100.5 1.700l-2.800 2.700.700 3.800c.1.800-.7 1.400-1.400 1l-3.400-1.800-3.400 1.800c-.7.400-1.500-.2-1.400-1l.7-3.800L1.100 7.300c-.6-.6-.3-1.600.5-1.700l3.800-.600L7.100 1.500c.200-.400.500-.600.900-.600z" fill="#f4893a"/></svg>
<svg class="abs" style="left:50.30px;top:311.80px" width="15.200" height="15.200" viewBox="0 0 16 16"><path d="M8 .9c.4 0 .7.200.9.600l1.700 3.500 3.800.600c.8.100 1.100 1.100.5 1.700l-2.800 2.700.700 3.800c.1.800-.7 1.400-1.400 1l-3.400-1.800-3.400 1.800c-.7.400-1.500-.2-1.400-1l.7-3.800L1.100 7.300c-.6-.6-.3-1.600.5-1.700l3.800-.600L7.100 1.500c.200-.400.500-.600.900-.600z" fill="#f4893a"/></svg>
<svg class="abs" style="left:68.20px;top:311.80px" width="15.200" height="15.200" viewBox="0 0 16 16"><path d="M8 .9c.4 0 .7.200.9.600l1.700 3.500 3.800.600c.8.100 1.100 1.100.5 1.700l-2.800 2.700.700 3.800c.1.800-.7 1.400-1.400 1l-3.400-1.800-3.400 1.800c-.7.400-1.500-.2-1.400-1l.7-3.800L1.100 7.300c-.6-.6-.3-1.600.5-1.700l3.800-.600L7.100 1.500c.200-.400.500-.600.900-.600z" fill="#f4893a"/></svg>
<svg class="abs" style="left:86.10px;top:311.80px" width="15.200" height="15.200" viewBox="0 0 16 16"><path d="M8 .9c.4 0 .7.200.9.600l1.700 3.500 3.800.600c.8.100 1.100 1.100.5 1.700l-2.800 2.700.700 3.800c.1.800-.7 1.400-1.400 1l-3.400-1.800-3.400 1.800c-.7.400-1.500-.2-1.400-1l.7-3.800L1.100 7.300c-.6-.6-.3-1.600.5-1.700l3.800-.600L7.100 1.500c.200-.400.500-.600.900-.600z" fill="#f4893a"/></svg>
<div class="abs" style="left:111.3px;top:312.9px;width:1px;height:13px;background:#cfd7df"></div>
<span class="abs" style="left:119.50px;top:315.00px;font-size:8.5px;line-height:11px;white-space:nowrap;color:#264966;letter-spacing:.200px">Excellent</span>
<div class="abs" style="left:0;top:344px;width:269.500px;height:1px;background:#ebeff3"></div>
<div class="abs" style="left:211.3px;top:352.3px;width:46.200px;height:24.300px;border-radius:3px;background:#12344d;border:1px solid #0b2233;color:#fff;font-weight:bold;font-size:10.400px;line-height:22.500px;text-align:center">Save</div>
</div>
<div class="abs" style="left:49px;top:617px;width:943px;height:4px;background:linear-gradient(90deg,#fff 0,#fff 661px,#f6f7f9 661px)"></div>
<div class="abs" style="left:710px;top:617px;width:1px;height:4px;background:#dfe5ea"></div><div class="abs" style="left:945px;top:617px;width:1px;height:4px;background:#dfe5ea"></div>
<span class="abs" style="left:66px;top:618px;font-size:8px;line-height:10px;color:#475867;white-space:nowrap">Last response</span>
<span class="abs" style="left:208px;top:618px;font-size:8px;line-height:10px;color:#92a2b1;white-space:nowrap">Not available</span>
<span class="abs" style="left:400.00px;top:618.00px;font-size:8.5px;line-height:11px;color:#1f2933;white-space:nowrap">Mobile</span>
<span class="abs" style="left:545.00px;top:618.00px;font-size:8.5px;line-height:11px;color:#2c5cc5;white-space:nowrap">+15557478787</span>
</body>
</html>
